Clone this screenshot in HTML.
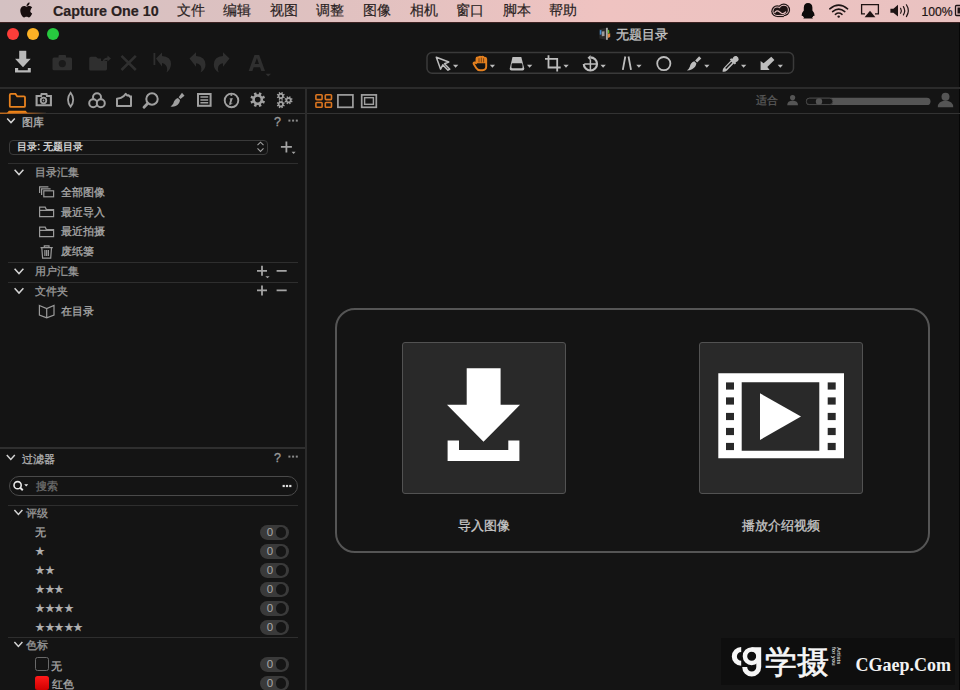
<!DOCTYPE html>
<html><head><meta charset="utf-8">
<style>
*{margin:0;padding:0;box-sizing:border-box}
html,body{width:960px;height:690px;overflow:hidden;background:#141414;font-family:"Liberation Sans",sans-serif;}
.a{position:absolute}
#menubar{left:0;top:0;width:960px;height:23px;background:linear-gradient(90deg,#d4c1c2 0%,#dfc1c0 33%,#efc3c1 63%,#e9c2c1 100%);border-bottom:1px solid #3c2222}
.mi{position:absolute;top:3px;font-size:13.5px;color:#2a1f1f;line-height:16px;white-space:nowrap;-webkit-text-stroke-width:0.2px}
.ln{position:absolute;background:#2e2e2e}
.t{position:absolute;white-space:nowrap;line-height:1;color:#a9a9a9;font-size:11px;-webkit-text-stroke-width:0.3px}
</style></head><body>
<div id="menubar" class="a">
  <svg class="a" style="left:19.5px;top:2px" width="13" height="16" viewBox="0 0 13 16"><path fill="#180f0f" d="M10.6 8.5c0-1.9 1.5-2.8 1.6-2.9-.9-1.3-2.3-1.5-2.8-1.5-1.200-.1-2.300.7-2.900.7-.6 0-1.500-.7-2.500-.7C2.700 4.100 1.500 4.900.900 6-.400 8.300.600 11.700 1.800 13.500c.6.9 1.300 1.900 2.300 1.900.9 0 1.300-.6 2.400-.6s1.400.6 2.400.6c1 0 1.600-.9 2.200-1.800.7-1 1-2 1-2.100 0 0-1.900-.7-1.900-3zM8.800 2.900c.5-.6.900-1.500.8-2.400-.8 0-1.700.5-2.300 1.200-.5.6-.9 1.500-.8 2.300.9.1 1.700-.4 2.300-1.100z"/></svg>
  <div class="mi" style="left:53px;font-weight:bold;font-size:14.3px;top:2.5px">Capture One 10</div>
  <div class="mi" style="left:177px">文件</div>
  <div class="mi" style="left:223px">编辑</div>
  <div class="mi" style="left:270px">视图</div>
  <div class="mi" style="left:316px">调整</div>
  <div class="mi" style="left:363px">图像</div>
  <div class="mi" style="left:410px">相机</div>
  <div class="mi" style="left:456px">窗口</div>
  <div class="mi" style="left:503px">脚本</div>
  <div class="mi" style="left:549px">帮助</div>
  <div class="mi" style="left:921.5px;font-size:12.2px;top:3.5px;color:#1e1414">100%</div>
</div>
<!-- traffic lights -->
<div class="a" style="left:7px;top:28px;width:12px;height:12px;border-radius:50%;background:#fc3d39"></div>
<div class="a" style="left:27px;top:28px;width:12px;height:12px;border-radius:50%;background:#fdb225"></div>
<div class="a" style="left:47px;top:28px;width:12px;height:12px;border-radius:50%;background:#27c93f"></div>

<!-- lines -->
<div class="a" style="left:959px;top:23px;width:1px;height:667px;background:#060606"></div>
<div class="ln" style="left:0;top:87px;width:960px;height:2px;background:#2b2b2b"></div>
<div class="ln" style="left:0;top:113px;width:960px;height:1px;background:#333"></div>
<div class="ln" style="left:305px;top:88px;width:2px;height:602px;background:#2c2c2c"></div>


<!-- library panel -->
<div class="t" style="left:22px;top:117px;font-size:11px;color:#b4b4b4">图库</div>
<div class="t" style="left:274px;top:116px;font-size:12.5px;color:#9a9a9a">?</div>
<div class="a" style="left:9px;top:139.5px;width:259px;height:15.5px;border:1px solid #3a3a3a;border-radius:4px"></div>
<div class="t" style="left:17px;top:142px;font-size:10px;color:#d0d0d0;font-weight:bold;-webkit-text-stroke-width:0">目录: 无题目录</div>
<div class="ln" style="left:8px;top:162.5px;width:290px;height:1px"></div>
<div class="t" style="left:35px;top:166.5px;font-size:11px;color:#9a9a9a">目录汇集</div>
<div class="t" style="left:61px;top:186.5px;font-size:11px;color:#a8a8a8">全部图像</div>
<div class="t" style="left:61px;top:206.5px;font-size:11px;color:#a8a8a8">最近导入</div>
<div class="t" style="left:61px;top:226px;font-size:11px;color:#a8a8a8">最近拍摄</div>
<div class="t" style="left:61px;top:246px;font-size:11px;color:#a8a8a8">废纸篓</div>
<div class="ln" style="left:8px;top:261.5px;width:290px;height:1px"></div>
<div class="t" style="left:35px;top:265.5px;font-size:11px;color:#9a9a9a">用户汇集</div>
<div class="ln" style="left:8px;top:281.5px;width:290px;height:1px"></div>
<div class="t" style="left:35px;top:285.5px;font-size:11px;color:#9a9a9a">文件夹</div>
<div class="t" style="left:61px;top:305.5px;font-size:11px;color:#a8a8a8">在目录</div>

<!-- filter panel -->
<div class="ln" style="left:0;top:447.3px;width:305px;height:2px;background:#2f2f2f"></div>
<div class="t" style="left:22px;top:453.5px;font-size:11px;color:#b0b0b0">过滤器</div>
<div class="t" style="left:274px;top:452px;font-size:12.5px;color:#9a9a9a">?</div>
<div class="a" style="left:8.5px;top:476px;width:289px;height:20px;border:1.3px solid #4a4a4a;border-radius:10px"></div>
<div class="t" style="left:36px;top:481px;font-size:10.5px;color:#6e6e6e">搜索</div>
<div class="ln" style="left:8px;top:504.5px;width:290px;height:1px"></div>
<div class="t" style="left:26px;top:508px;font-size:11px;color:#9a9a9a">评级</div>
<div class="t" style="left:35px;top:527px;font-size:11px;color:#a8a8a8">无</div>
<div class="t" style="left:35px;top:546px;font-size:11px;color:#b0b0b0;letter-spacing:-0.5px">★</div>
<div class="t" style="left:35px;top:565px;font-size:11px;color:#b0b0b0;letter-spacing:-0.5px">★★</div>
<div class="t" style="left:35px;top:584px;font-size:11px;color:#b0b0b0;letter-spacing:-0.5px">★★★</div>
<div class="t" style="left:35px;top:603px;font-size:11px;color:#b0b0b0;letter-spacing:-0.5px">★★★★</div>
<div class="t" style="left:35px;top:622px;font-size:11px;color:#b0b0b0;letter-spacing:-0.5px">★★★★★</div>
<div class="ln" style="left:8px;top:636.5px;width:290px;height:1px"></div>
<div class="t" style="left:26px;top:640px;font-size:11px;color:#9a9a9a">色标</div>
<div class="a" style="left:35px;top:657px;width:13.5px;height:13.5px;border:1.5px solid #6a6a6a;border-radius:2.5px"></div>
<div class="t" style="left:51px;top:660.5px;font-size:11px;color:#a8a8a8">无</div>
<div class="a" style="left:35px;top:676px;width:13.5px;height:14px;background:linear-gradient(#ff1a1a,#d00000);border-radius:2.5px"></div>
<div class="t" style="left:52px;top:679px;font-size:11px;color:#a8a8a8">红色</div>
<div class="a" style="left:259.6px;top:525.2px;width:29px;height:14.8px;border-radius:7.4px;background:#3a3a3a"></div><div class="a" style="left:275.6px;top:527.3000000000001px;width:10.6px;height:10.6px;border-radius:50%;background:#151515"></div><div class="t" style="left:266.8px;top:527.4000000000001px;font-size:11.5px;color:#a8a8a8;-webkit-text-stroke-width:0">0</div>
<div class="a" style="left:259.6px;top:544.2px;width:29px;height:14.8px;border-radius:7.4px;background:#3a3a3a"></div><div class="a" style="left:275.6px;top:546.3000000000001px;width:10.6px;height:10.6px;border-radius:50%;background:#151515"></div><div class="t" style="left:266.8px;top:546.4000000000001px;font-size:11.5px;color:#a8a8a8;-webkit-text-stroke-width:0">0</div>
<div class="a" style="left:259.6px;top:563.2px;width:29px;height:14.8px;border-radius:7.4px;background:#3a3a3a"></div><div class="a" style="left:275.6px;top:565.3000000000001px;width:10.6px;height:10.6px;border-radius:50%;background:#151515"></div><div class="t" style="left:266.8px;top:565.4000000000001px;font-size:11.5px;color:#a8a8a8;-webkit-text-stroke-width:0">0</div>
<div class="a" style="left:259.6px;top:582.2px;width:29px;height:14.8px;border-radius:7.4px;background:#3a3a3a"></div><div class="a" style="left:275.6px;top:584.3000000000001px;width:10.6px;height:10.6px;border-radius:50%;background:#151515"></div><div class="t" style="left:266.8px;top:584.4000000000001px;font-size:11.5px;color:#a8a8a8;-webkit-text-stroke-width:0">0</div>
<div class="a" style="left:259.6px;top:601.2px;width:29px;height:14.8px;border-radius:7.4px;background:#3a3a3a"></div><div class="a" style="left:275.6px;top:603.3000000000001px;width:10.6px;height:10.6px;border-radius:50%;background:#151515"></div><div class="t" style="left:266.8px;top:603.4000000000001px;font-size:11.5px;color:#a8a8a8;-webkit-text-stroke-width:0">0</div>
<div class="a" style="left:259.6px;top:620.2px;width:29px;height:14.8px;border-radius:7.4px;background:#3a3a3a"></div><div class="a" style="left:275.6px;top:622.3000000000001px;width:10.6px;height:10.6px;border-radius:50%;background:#151515"></div><div class="t" style="left:266.8px;top:622.4000000000001px;font-size:11.5px;color:#a8a8a8;-webkit-text-stroke-width:0">0</div>
<div class="a" style="left:259.6px;top:657.2px;width:29px;height:14.8px;border-radius:7.4px;background:#3a3a3a"></div><div class="a" style="left:275.6px;top:659.3000000000001px;width:10.6px;height:10.6px;border-radius:50%;background:#151515"></div><div class="t" style="left:266.8px;top:659.4000000000001px;font-size:11.5px;color:#a8a8a8;-webkit-text-stroke-width:0">0</div>
<div class="a" style="left:259.6px;top:676.2px;width:29px;height:14.8px;border-radius:7.4px;background:#3a3a3a"></div><div class="a" style="left:275.6px;top:678.3000000000001px;width:10.6px;height:10.6px;border-radius:50%;background:#151515"></div><div class="t" style="left:266.8px;top:678.4000000000001px;font-size:11.5px;color:#a8a8a8;-webkit-text-stroke-width:0">0</div>
<!-- center big box -->
<div class="a" style="left:335px;top:307.5px;width:595px;height:245.3px;border:2.4px solid #555;border-radius:20px"></div>
<div class="a" style="left:401.5px;top:342px;width:164px;height:152px;background:#292929;border:1.2px solid #525252;border-radius:3px"></div>
<div class="a" style="left:698.5px;top:342px;width:164px;height:152px;background:#292929;border:1.2px solid #525252;border-radius:3px"></div>
<div class="t" style="left:616px;top:27.5px;font-size:13px;color:#c8c8c8">无题目录</div>
<div class="t" style="left:756px;top:95px;font-size:10.5px;color:#595959">适合</div>
<div class="t" style="left:457.5px;top:519.2px;font-size:13.1px;color:#c8c8c8">导入图像</div>
<div class="t" style="left:741.8px;top:519.2px;font-size:13.1px;color:#c8c8c8">播放介绍视频</div>

<svg class="a" style="left:0;top:0" width="960" height="690" viewBox="0 0 960 690">
<!-- download -->
<g fill="#b9b9b9" stroke="#0a0a0a" stroke-width="0.8" paint-order="stroke">
<path d="M19.2 50.8H26.3V58.7H30.8L23 67.2L15 58.7H19.2Z"/>
<path d="M15 68H18.2V70.3H27.8V68H30.8V72.6H15Z"/>
</g>
<!-- disabled icons -->
<g fill="#2f2f2f">
<rect x="52.5" y="57.5" width="19.5" height="12.8" rx="1.5"/>
<rect x="58.5" y="55" width="7.5" height="4" rx="1"/>
<circle cx="62.3" cy="63.6" r="3.6" fill="#1a1a1a"/>
<path d="M89.2 58.5Q89.2 56.8 91 56.8H96L98 58.5H101V61H107V69Q107 70.4 105.5 70.4H90.7Q89.2 70.4 89.2 68.9Z"/>
<path d="M102.5 62.5Q102.8 58.2 107.5 57.6V55.6L111 58.6L107.5 61.6V59.8Q104.5 60 102.5 62.5Z"/>
</g>
<g stroke="#2f2f2f" stroke-width="2.6" fill="none">
<path d="M121.5 55.8L135.8 70M135.8 55.8L121.5 70"/>
</g>
<g fill="#2f2f2f">
<rect x="153.5" y="53" width="1.8" height="12"/>
<path d="M156 58.5L162 52.5V56Q171 56.5 171 64Q171 69 166.5 72.5Q168 68.5 166 65.5Q164.5 63 162 63V66.5Z"/>
<path d="M189.5 58.5L196 52.3V56Q205.5 56.8 205.5 64.5Q205.5 69.5 200.5 72.6Q202.5 68 200 65Q198.5 63.2 196 63.2V66.8Z"/>
<path d="M229.5 58.5L223 52.3V56Q213.8 56.8 213.8 64.5Q213.8 69.5 218.8 72.6Q216.8 68 219.3 65Q220.8 63.2 223 63.2V66.8Z"/>
<path d="M254.5 54.9H259.2L265 71H261.3L260 67.3H253.7L252.4 71H248.7ZM254.7 64H259L256.9 58Z"/>
<path d="M265.5 73.8H271L268.2 76.5Z"/>
</g>
<!-- tools box -->
<rect x="427" y="52.6" width="366.5" height="20.6" rx="5" fill="none" stroke="#3a3a3a" stroke-width="1.5"/>
<g fill="#bdbdbd">
<path d="M458.3 64.7H453L455.6 67.8Z"/>
<path d="M495 64.7H489.8L492.4 67.8Z"/>
<path d="M532.3 64.7H527L529.6 67.8Z"/>
<path d="M568.7 64.7H563.4L566 67.8Z"/>
<path d="M605.8 64.7H600.5L603.1 67.8Z"/>
<path d="M641.6 64.7H636.3L638.9 67.8Z"/>
<path d="M709.5 64.7H704.2L706.8 67.8Z"/>
<path d="M746.3 64.7H741L743.6 67.8Z"/>
<path d="M783 64.7H777.7L780.3 67.8Z"/>
</g>
<!-- cursor -->
<path d="M436.3 57.2L448.8 62L444.5 63.8L449.8 69.2L448 70.2L442.8 64.9L440.6 69.2Z" fill="none" stroke="#bdbdbd" stroke-width="1.5" stroke-linejoin="round"/>
<!-- hand -->
<path d="M476.5 62.5V58.8Q476.5 57.5 477.7 57.5Q478.8 57.5 478.8 58.8V57.6Q478.8 56.6 480 56.6Q481.2 56.6 481.2 57.6V57.6Q481.2 56.8 482.4 56.8Q483.6 56.8 483.6 58V58.6Q483.6 57.7 484.8 57.7Q486 57.7 486.2 59V66.5Q486.2 70 482.5 70.2H480Q477.5 70.2 476.2 68L473.7 64Q473.2 62.8 474.3 62.5Q475.2 62.2 476 63.3Z" fill="none" stroke="#e4801f" stroke-width="1.9" stroke-linejoin="round"/>
<path d="M476.6 63.2V58.6Q476.6 57.2 478 57.2L480 56.6H482.4L484.6 57.4Q486.2 57.6 486.2 59V63.2Z" fill="#e4801f"/><path d="M479 58.2V62.4M481.3 57.6V62.4M483.6 58.2V62.4" stroke="#4a2a10" stroke-width="0.7"/>
<!-- keystone -->
<path d="M512.5 57H521.3L524.3 68.8Q524.3 70.4 522.7 70.4H511.3Q509.7 70.4 509.7 68.8Z" fill="#bdbdbd"/>
<path d="M512.5 63.3H521.5Q522.3 63.3 522.4 64.5L522.6 67.2Q522.6 68.3 521.5 68.3H512.5Q511.4 68.3 511.4 67.2L511.6 64.5Q511.7 63.3 512.5 63.3Z" fill="#141414"/>
<!-- crop -->
<path d="M548.5 55.3V67.5H560.7M545 58.8H557.2V71.4" fill="none" stroke="#bdbdbd" stroke-width="1.8"/>
<!-- rotate -->
<g fill="none" stroke="#bdbdbd" stroke-width="2.2">
<path d="M590.4 57.3A6.6 6.6 0 1 1 583.8 63.9"/>
<path d="M590.4 59.5V70.2M584.3 64H596.8" stroke-width="1.5"/>
</g>
<path d="M590.5 55L590.5 60.5L587.5 57.7Z" fill="#bdbdbd"/>
<!-- perspective -->
<path d="M625.3 56.5L622.8 69.9M628.5 56.5L631 69.9" stroke="#bdbdbd" stroke-width="1.8"/>
<circle cx="663.8" cy="63.6" r="6.6" fill="none" stroke="#bdbdbd" stroke-width="1.8"/>
<!-- brush -->
<path d="M701.3 58.6L699.1 56.2L695.2 60.6L697.1 62.4Z" fill="#bdbdbd"/>
<path d="M694.3 61.3L696.4 63.3Q696 67.2 692 69.3Q689.5 70.5 686.9 70.5Q689 69 689.8 66.8Q690.6 62.5 694.3 61.3Z" fill="#bdbdbd"/>
<!-- eyedropper -->
<path d="M736.5 56.1Q738.8 57.2 738.7 59.5Q738.5 60.6 737.3 61.4L735.6 62.2L736.1 63.3L734.7 64.6L733.8 63.6L727 70.4Q725.5 71.7 723.8 71.8H722.6V70.8Q722.6 69 724.1 67.6L730.8 60.6L729.8 59.6L731.2 58.3L732.2 58.9L733.5 57.1Q734.8 55.4 736.5 56.1Z" fill="#bdbdbd"/>
<path d="M731.3 61.7L725.2 68L726.2 69L732.3 62.7Z" fill="#141414"/>
<!-- arrow down-left -->
<path d="M771.3 56.8L774.4 59.9L767.3 66.9L769.6 69.9H760.6V60.9L763.6 63.2Z" fill="#bdbdbd"/>

<!-- tabs -->
<path d="M9.8 95Q9.8 93.9 10.9 93.9H15.5L17.2 96.4H24Q25 96.4 25 97.4V105.9Q25 106.9 24 106.9H10.8Q9.8 106.9 9.8 105.9Z" fill="none" stroke="#e8821e" stroke-width="1.8"/>
<path d="M7 113H27.5L25.7 110.8H8.8Z" fill="#f08416"/>
<defs><linearGradient id="og" x1="0" x2="1"><stop offset="0" stop-color="#e07a1a"/><stop offset="0.6" stop-color="#b8641c"/><stop offset="1" stop-color="#333"/></linearGradient></defs><rect x="0" y="112.6" width="46" height="1.2" fill="url(#og)"/>
<g fill="none" stroke="#a0a0a0" stroke-width="2.1">
<path d="M36.6 96H41L41.6 94H46.4L47 96H50.9V105.2H36.6Z"/>
<circle cx="43.5" cy="100.5" r="2.8" stroke-width="1.8"/>
</g>
<circle cx="43.5" cy="100.5" r="0.9" fill="#a0a0a0"/>
<path d="M70.6 92.8Q73.2 96 73.2 99.8Q73.2 103.6 70.6 106.8Q68 103.6 68 99.8Q68 96 70.6 92.8Z" fill="none" stroke="#a0a0a0" stroke-width="1.8"/>
<g stroke="#a0a0a0" stroke-width="2" fill="#141414">
<circle cx="97" cy="97.3" r="4"/>
<circle cx="93.2" cy="103.2" r="4"/>
<circle cx="100.8" cy="103.2" r="4"/>
</g>
<path d="M117 106V98.8Q121.5 98.3 123.5 96.3L125.7 93.8L127.3 95.6L128.8 95.3L130 96.8L131 96.4V106Z" fill="none" stroke="#a0a0a0" stroke-width="2" stroke-linejoin="round"/>
<circle cx="152" cy="99" r="5.7" fill="none" stroke="#a0a0a0" stroke-width="2"/>
<path d="M147.6 103.5L144 107.2" stroke="#a0a0a0" stroke-width="2.8" stroke-linecap="round"/>
<path d="M184.5 95.7L182 92.7L178.6 97.2L180.5 99Z" fill="#a0a0a0"/>
<path d="M177.9 98.1L180 100Q179.6 104 175.7 106Q173.2 107 170.5 106.5Q172.5 105 173.3 103.6Q174.4 99.4 177.9 98.1Z" fill="#a0a0a0"/>
<g fill="none" stroke="#a0a0a0" stroke-width="2">
<rect x="198" y="94" width="12.6" height="11.8"/>
<path d="M200.4 97.1H208.2M200.4 100H208.2M200.4 102.8H208.2" stroke-width="1.5"/>
<circle cx="231.5" cy="100.4" r="6.8" stroke-width="1.9"/>
</g>
<path d="M231.3 96.1a1 1 0 1 1 .1 0zM229.6 98.5L232.8 98.1L231.1 103.6Q231.8 103.5 232.4 102.8L232.7 103.1Q231.5 104.8 229.9 104.9Q228.8 104.9 229.2 103.8L230.3 99.6Q230.2 99.1 229.6 99.2Z" fill="#a0a0a0"/>
<path fill="#a0a0a0" fill-rule="evenodd" d="M263.03 100.48 L265.03 101.21 L264.02 103.64 L262.09 102.75 L260.85 103.99 L261.74 105.92 L259.31 106.93 L258.58 104.93 L256.82 104.93 L256.09 106.93 L253.66 105.92 L254.55 103.99 L253.31 102.75 L251.38 103.64 L250.37 101.21 L252.37 100.48 L252.37 98.72 L250.37 97.99 L251.38 95.56 L253.31 96.45 L254.55 95.21 L253.66 93.28 L256.09 92.27 L256.82 94.27 L258.58 94.27 L259.31 92.27 L261.74 93.28 L260.85 95.21 L262.09 96.45 L264.02 95.56 L265.03 97.99 L263.03 98.72ZM260.50 99.60A2.8 2.8 0 1 0 254.90 99.60A2.8 2.8 0 1 0 260.50 99.60ZM283.76 96.49 L284.80 96.88 L284.25 98.21 L283.24 97.75 L282.55 98.44 L283.01 99.45 L281.68 100.00 L281.29 98.96 L280.31 98.96 L279.92 100.00 L278.59 99.45 L279.05 98.44 L278.36 97.75 L277.35 98.21 L276.80 96.88 L277.84 96.49 L277.84 95.51 L276.80 95.12 L277.35 93.79 L278.36 94.25 L279.05 93.56 L278.59 92.55 L279.92 92.00 L280.31 93.04 L281.29 93.04 L281.68 92.00 L283.01 92.55 L282.55 93.56 L283.24 94.25 L284.25 93.79 L284.80 95.12 L283.76 95.51ZM282.10 96.00A1.3 1.3 0 1 0 279.50 96.00A1.3 1.3 0 1 0 282.10 96.00ZM291.56 100.69 L292.60 101.08 L292.05 102.41 L291.04 101.95 L290.35 102.64 L290.81 103.65 L289.48 104.20 L289.09 103.16 L288.11 103.16 L287.72 104.20 L286.39 103.65 L286.85 102.64 L286.16 101.95 L285.15 102.41 L284.60 101.08 L285.64 100.69 L285.64 99.71 L284.60 99.32 L285.15 97.99 L286.16 98.45 L286.85 97.76 L286.39 96.75 L287.72 96.20 L288.11 97.24 L289.09 97.24 L289.48 96.20 L290.81 96.75 L290.35 97.76 L291.04 98.45 L292.05 97.99 L292.60 99.32 L291.56 99.71ZM289.90 100.20A1.3 1.3 0 1 0 287.30 100.20A1.3 1.3 0 1 0 289.90 100.20ZM283.76 104.79 L284.80 105.18 L284.25 106.51 L283.24 106.05 L282.55 106.74 L283.01 107.75 L281.68 108.30 L281.29 107.26 L280.31 107.26 L279.92 108.30 L278.59 107.75 L279.05 106.74 L278.36 106.05 L277.35 106.51 L276.80 105.18 L277.84 104.79 L277.84 103.81 L276.80 103.42 L277.35 102.09 L278.36 102.55 L279.05 101.86 L278.59 100.85 L279.92 100.30 L280.31 101.34 L281.29 101.34 L281.68 100.30 L283.01 100.85 L282.55 101.86 L283.24 102.55 L284.25 102.09 L284.80 103.42 L283.76 103.81ZM282.10 104.30A1.3 1.3 0 1 0 279.50 104.30A1.3 1.3 0 1 0 282.10 104.30Z"/>
<!-- view mode icons -->
<g fill="none" stroke="#dc7620" stroke-width="1.6">
<rect x="315.9" y="94.8" width="6.2" height="4.8" rx="0.8"/>
<rect x="325.3" y="94.8" width="6.2" height="4.8" rx="0.8"/>
<rect x="315.9" y="102.5" width="6.2" height="4.8" rx="0.8"/>
<rect x="325.3" y="102.5" width="6.2" height="4.8" rx="0.8"/>
</g>
<g fill="none" stroke="#a0a0a0" stroke-width="1.7">
<rect x="337.9" y="94.9" width="15" height="12.4"/>
<rect x="361.7" y="94.9" width="14.6" height="12.4"/>
<rect x="364.6" y="97.7" width="8.8" height="6.6" stroke-width="1.4"/>
</g>
<!-- zoom slider -->
<g fill="#555">
<circle cx="792.6" cy="97.6" r="2.6"/>
<path d="M787.2 105.2Q787.2 101 792.6 100.6Q798 101 798 105.2Z"/>
<rect x="806" y="97.8" width="124.5" height="7.2" rx="3.6"/>
<circle cx="945.5" cy="96.8" r="4"/>
<path d="M937.8 107.3Q937.8 101.3 945.5 100.6Q953.2 101.3 953.2 107.3Z"/>
</g>
<rect x="806.3" y="98.2" width="26.5" height="6.4" rx="3.2" fill="#161616" stroke="#4a4a4a" stroke-width="0.8"/>
<circle cx="819" cy="101.4" r="3.2" fill="#555"/>

<!-- sidebar icons -->
<g fill="none" stroke="#d4d4d4" stroke-width="1.5">
<path d="M7.2 118.6L11 122.6L14.8 118.6"/>
<path d="M14.6 169.8L19 174.6L23.4 169.8"/>
<path d="M14.6 268.8L19 273.6L23.4 268.8"/>
<path d="M14.6 288.3L19 293.1L23.4 288.3"/>
<path d="M6.8 455L10.8 459.4L14.8 455"/>
<path d="M14.4 510L18.4 514.4L22.4 510"/>
<path d="M14.4 642L18.4 646.4L22.4 642"/>
</g>
<g fill="none" stroke="#9a9a9a" stroke-width="1.2">
<path d="M39.6 193V186.8H48.4M41.6 195V188.8H50.6"/>
<rect x="43.8" y="190.8" width="9.8" height="6"/>
<path d="M39.6 216.6V207.2H45.2L46.4 209.6H53.6V216.6ZM39.6 210.4H53.6"/>
<path d="M39.6 236.6V227.2H45.2L46.4 229.6H53.6V236.6ZM39.6 230.4H53.6"/>
<path d="M40.5 247.6H52.8M44.3 247.6V245.9H49V247.6M41.8 247.6L42.6 258.2H50.7L51.5 247.6M44.9 250V256M46.65 250V256M48.4 250V256"/>
<path d="M39.4 305.5L46.7 308.5L54 305.5V315L46.7 317.8L39.4 315ZM46.7 308.5V317.8"/>
</g>
<g stroke="#a4a4a4" stroke-width="1.8" fill="none">
<path d="M262 265.8V275.8M257 270.8H267M276.6 270.8H286.7"/>
<path d="M262 285.4V295.4M257 290.4H267M276.6 290.4H286.7"/>
<path d="M286.4 141.4V152.4M280.9 146.9H291.9"/>
</g>
<path d="M265.4 276.2H269.6L267.5 278.3Z" fill="#a4a4a4"/>
<path d="M291.6 151.8H295.6L293.6 154Z" fill="#a4a4a4"/>
<g fill="#8a8a8a">
<rect x="288.4" y="119.6" width="2" height="2"/><rect x="292.1" y="119.6" width="2" height="2"/><rect x="295.8" y="119.6" width="2" height="2"/>
<rect x="288.4" y="455.6" width="2" height="2"/><rect x="292.1" y="455.6" width="2" height="2"/><rect x="295.8" y="455.6" width="2" height="2"/>
</g>
<g fill="#e0e0e0">
<rect x="282.6" y="484.9" width="2.2" height="2.2"/><rect x="285.9" y="484.9" width="2.2" height="2.2"/><rect x="289.2" y="484.9" width="2.2" height="2.2"/>
</g>
<g fill="none" stroke="#a0a0a0" stroke-width="1.1">
<path d="M257.5 145.2L260.5 142.2L263.5 145.2M257.5 148.4L260.5 151.4L263.5 148.4"/>
</g>
<g fill="none" stroke="#e8e8e8" stroke-width="1.6">
<circle cx="17.6" cy="485.2" r="3.6"/>
<path d="M20.2 487.8L22.8 490.2" stroke-width="2"/>
</g>
<path d="M24.2 484.2H28.2L26.2 486.5Z" fill="#e8e8e8"/>

<!-- big import arrow -->
<g fill="#ffffff">
<path d="M466.7 368.2H500.6V404.8H520L483.5 441.8L447 404.8H466.7Z"/>
<path d="M447.6 440.6H459V449.9H508.3V440.6H519.4V460.9H447.6Z"/>
</g>
<!-- film -->
<path fill="#ffffff" fill-rule="evenodd" d="M718.3 373.3H844V458.3H718.3ZM741.7 382.3V450.7H819.3V382.3Z"/>
<g fill="#292929"><rect x="726" y="382.4" width="8" height="7.2"/><rect x="827.7" y="382.4" width="8" height="7.2"/><rect x="726" y="397.4" width="8" height="7.2"/><rect x="827.7" y="397.4" width="8" height="7.2"/><rect x="726" y="412.9" width="8" height="7.2"/><rect x="827.7" y="412.9" width="8" height="7.2"/><rect x="726" y="427.9" width="8" height="7.2"/><rect x="827.7" y="427.9" width="8" height="7.2"/><rect x="726" y="442.9" width="8" height="7.2"/><rect x="827.7" y="442.9" width="8" height="7.2"/></g>
<path d="M760 393.3L801 416.6L760 440Z" fill="#ffffff"/>

<!-- menubar right icons -->
<g fill="#1e1414"><circle cx="777.2" cy="11.2" r="5.9"/><circle cx="783.8" cy="9.9" r="6.3"/><rect x="777.2" y="11" width="6.6" height="6.1"/></g>
<g fill="#e8c2c2"><circle cx="777.2" cy="11.2" r="4.7"/><circle cx="783.8" cy="9.9" r="5.1"/><rect x="777.2" y="11" width="6.6" height="4.9"/></g>
<g fill="#1e1414"><circle cx="777.2" cy="11.2" r="3.7"/><circle cx="783.8" cy="9.9" r="4.1"/><rect x="777.2" y="11" width="6.6" height="3.9"/></g>
<path d="M774.6 12.8Q776.8 9.6 779.4 11.8L781.4 13.2Q783.6 14.4 786 11.6" fill="none" stroke="#e8c2c2" stroke-width="1.3"/>
<path fill="#0e0a0a" d="M808 3Q812.2 3 812.4 7.5V10.5Q814.6 12.8 814.6 15.6Q814.2 16.4 813.2 15.8Q813.2 17.2 812 17.6L813 18.4H803.2L804.2 17.6Q803 17.2 803 15.8Q802 16.4 801.6 15.6Q801.6 12.8 803.8 10.5V7.5Q804 3 808 3Z"/>
<g fill="none" stroke="#1e1414" stroke-width="1.6" stroke-linecap="round">
<path d="M829.8 8.8Q838.7 1.5 847.6 8.8"/>
<path d="M832.6 11.6Q838.7 6.6 844.8 11.6"/>
<path d="M835.4 14.3Q838.7 11.7 842 14.3"/>
</g>
<circle cx="838.7" cy="16.6" r="1.2" fill="#1e1414"/>
<path d="M865 13.8H861.6V4.6H878.4V13.8H875" fill="none" stroke="#1e1414" stroke-width="1.3"/>
<path d="M864.6 17.2L870 10.8L875.4 17.2Z" fill="#1e1414"/>
<path d="M890.4 8.8H893.4L898 4.8V16.6L893.4 12.8H890.4Z" fill="#1e1414"/>
<g fill="none" stroke="#1e1414" stroke-width="1.2" stroke-linecap="round">
<path d="M900.6 8.3Q902 10.7 900.6 13.2"/>
<path d="M903.4 6.6Q906 10.7 903.4 14.9"/>
<path d="M906.4 4.8Q910.2 10.7 906.4 16.6"/>
</g>
<rect x="955.5" y="5.5" width="8" height="10" rx="1" fill="none" stroke="#1e1414" stroke-width="1.3"/>
<rect x="957.5" y="7.5" width="5" height="6" fill="#1e1414"/>
<!-- title doc icon -->
<path d="M599.4 29L606 28V39.8L599.4 38.6Z" fill="#2a2a2a"/>
<path d="M599.8 30.2L601.4 29.9V34.5L599.8 34.7Z" fill="#3d8ad0"/>
<path d="M601.8 31.6L604.5 31.2V36L601.8 36.2Z" fill="#9a9a9a"/>
<rect x="606.3" y="27.8" width="1.3" height="12" fill="#e8e8e8"/>
<path d="M607.8 29.5L609.3 30.5V33L607.8 34Z" fill="#66bb33"/>
<path d="M607.8 34L610.2 33.2V37L607.8 38Z" fill="#e08840"/>
</svg>

<div class="a" style="left:721px;top:637.5px;width:234px;height:47.5px;background:#0e0e0e"></div>
<svg class="a" style="left:0;top:0" width="960" height="690" viewBox="0 0 960 690">
<path fill="#f6f6f6" d="M741.2 647A9.4 9.4 0 0 0 741.2 665.8V660.7A4.3 4.3 0 0 1 741.2 652.1Z"/>
<path fill="#f6f6f6" fill-rule="evenodd" d="M760.7 656.2A9 9 0 1 1 742.7 656.2A9 9 0 1 1 760.7 656.2ZM756.2 656.2A4.5 4.5 0 1 0 747.2 656.2A4.5 4.5 0 1 0 756.2 656.2Z"/>
<path fill="#f6f6f6" d="M751.7 647.2H761.2V667H756.3V651.5H751.7Z"/>
<path fill="#f6f6f6" d="M761.2 667A9.5 9.5 0 0 1 742.2 667H747.2A4.5 4.5 0 0 0 756.3 667Z"/>
</svg>
<div class="t" style="left:765px;top:646.5px;font-size:31.5px;color:#f6f6f6;-webkit-text-stroke-width:0.6px">学摄</div>
<div class="t" style="left:841px;top:647px;width:17px;height:9px;font-size:5.5px;color:#cfcfcf;transform-origin:0 0;transform:rotate(90deg);line-height:4.5px;-webkit-text-stroke-width:0;font-weight:bold">Artists<br>for you</div>
<div class="t" style="left:855.5px;top:656px;font-family:'Liberation Serif',serif;font-weight:bold;font-size:18px;color:#f2f2f2;-webkit-text-stroke-width:0">CGaep.Com</div>
</body></html>
